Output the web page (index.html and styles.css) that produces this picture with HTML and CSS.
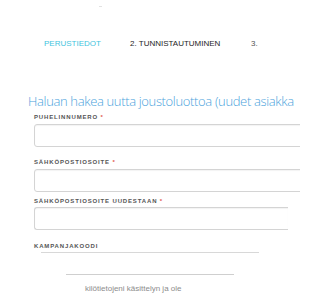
FILE: index.html
```html
<!DOCTYPE html>
<html lang="fi">
<head>
<meta charset="utf-8">
<link rel="stylesheet" href="styles.css">
</head>
<body>
<div class="page">
  <div class="topmark"></div>
  <nav class="steps">
    <span class="step step-done">PERUSTIEDOT</span>
    <span class="step step-active">2. TUNNISTAUTUMINEN</span>
    <span class="step step-next">3.</span>
  </nav>
  <h1 class="title">Haluan hakea uutta joustoluottoa (uudet asiakkaat)</h1>
  <form class="form">
    <label class="label l1">PUHELINNUMERO <span class="req">*</span></label>
    <div class="input i1"></div>
    <label class="label l2">SÄHKÖPOSTIOSOITE <span class="req">*</span></label>
    <div class="input i2"></div>
    <label class="label l3">SÄHKÖPOSTIOSOITE UUDESTAAN <span class="req">*</span></label>
    <div class="input i3"></div>
    <label class="label l4">KAMPANJAKOODI</label>
    <div class="line4"></div>
  </form>
  <div class="divider"></div>
  <p class="consent">kilötietojeni käsittelyn ja ole</p>
</div>
</body>
</html>
```
FILE: styles.css
```css
html, body {
  margin: 0;
  padding: 0;
  background: #fff;
  overflow: hidden;
}
.page {
  width: 300px;
  height: 300px;
  overflow: hidden;
  font-family: "Liberation Sans", Arial, sans-serif;
}
.topmark {
  margin: 6px 0 0 99px;
  width: 3px;
  height: 1px;
  background: #e2e2e2;
}
.steps {
  display: flex;
  margin-top: 32px;
  padding-left: 44px;
  font-size: 8px;
  line-height: 10px;
  white-space: nowrap;
}
.step-done {
  width: 86px;
  color: #3fc4de;
}
.step-active {
  width: 121px;
  color: #1e1e1e;
}
.step-next {
  color: #555;
}
.title {
  margin: 43px 0 0 28px;
  width: 266px;
  overflow: hidden;
  white-space: nowrap;
  font-family: "Open Sans", "Noto Sans", sans-serif;
  font-weight: 300;
  font-size: 13px;
  line-height: 18px;
  color: #4ba3dc;
  letter-spacing: -0.35px;
}
.form {
  padding-left: 34px;
  margin: 0;
}
.label {
  display: block;
  font-size: 6px;
  line-height: 8px;
  letter-spacing: 0.85px;
  color: #555;
  font-weight: bold;
  white-space: nowrap;
}
.req {
  color: #e25a4e;
}
.input {
  height: 21px;
  border: 1px solid #d4d4d4;
  border-radius: 3px;
  box-shadow: inset 0 1px 1px rgba(0,0,0,0.05);
}
.l1 { margin-top: 3px; }
.i1 { margin-top: 3px; width: 290px; }
.l2 { margin-top: 11px; }
.i2 { margin-top: 3px; width: 290px; }
.l3 { margin-top: 5px; }
.i3 { margin-top: 2px; width: 253px; border-right: none; border-radius: 3px 0 0 3px; }
.l4 { margin-top: 12px; }
.line4 {
  margin: 2px 0 0 7px;
  width: 218px;
  height: 1px;
  background: #d8d8d8;
}
.divider {
  margin: 21px 0 0 66px;
  width: 168px;
  height: 1px;
  background: #cfcfcf;
}
.consent {
  margin: 9px 0 0 85px;
  font-size: 8px;
  line-height: 10px;
  color: #8c8c8c;
  white-space: nowrap;
}
```
